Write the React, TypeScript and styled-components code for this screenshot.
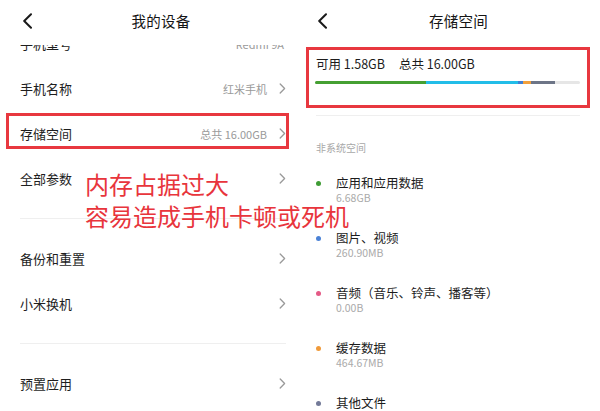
import React from "react";
import styled, { createGlobalStyle } from "styled-components";

const Global = createGlobalStyle`
  html, body { margin: 0; padding: 0; background: #fff; }
  body { font-family: "Noto Sans CJK SC", "Noto Sans", sans-serif; color: #1c1c1c; }
  * { box-sizing: border-box; }
`;

const Root = styled.div`
  position: relative;
  width: 600px;
  height: 411px;
  overflow: hidden;
  display: flex;
  background: #fff;
`;

const Panel = styled.div`
  width: 300px;
  height: 411px;
  display: flex;
  flex-direction: column;
  overflow: hidden;
`;

const Header = styled.div<{ $pl: number }>`
  position: relative;
  z-index: 2;
  height: 45px;
  flex: none;
  background: #fff;
  display: grid;
  grid-template-columns: 1fr auto 1fr;
  align-items: center;
  padding: 0 0 3px ${(p) => p.$pl}px;
`;

const Back = styled.svg`
  width: 11px;
  height: 16px;
  display: block;
`;

const Title = styled.div`
  font-size: 14.5px;
  color: #151515;
  line-height: 20px;
  letter-spacing: 0.3px;
`;

const Viewport = styled.div`
  flex: 1;
  overflow: hidden;
`;

const List = styled.div`
  margin-top: -24px;
`;

const Row = styled.div<{ $mark?: boolean }>`
  position: relative;
  height: 45px;
  display: flex;
  align-items: center;
  padding: 0 14px 0 20px;
  &::after {
    content: "";
    display: ${(p) => (p.$mark ? "block" : "none")};
    position: absolute;
    left: 6px;
    right: 11px;
    top: 2px;
    bottom: 7px;
    border: 3px solid #e8383f;
  }
`;

const Label = styled.div`
  flex: 1;
  font-size: 13px;
  color: #1e1e1e;
  line-height: 18px;
`;

const Value = styled.div<{ $noChevron?: boolean }>`
  font-size: 11px;
  color: #9a9a9a;
  margin-right: ${(p) => (p.$noChevron ? 2 : 12)}px;
  line-height: 16px;
`;

const Chevron = styled.svg`
  width: 7px;
  height: 11px;
  display: block;
`;

const Divider = styled.div<{ $m: string }>`
  height: 1px;
  background: #efefef;
  margin: ${(p) => p.$m};
`;

const Card = styled.div`
  margin: 2px 10px 0 6px;
  height: 61px;
  border: 3px solid #e8383f;
  padding: 5px 7px 0 6px;
`;

const Summary = styled.div`
  font-size: 12.5px;
  line-height: 18px;
  color: #1c1c1c;
  padding-left: 1px;
  display: flex;
  gap: 14px;
`;

const Bar = styled.div`
  margin-top: 8px;
  height: 3px;
  display: flex;
  background: #e6e6e6;
  border-radius: 2px;
  overflow: hidden;
`;

const Seg = styled.div<{ $c: string }>`
  height: 100%;
  background: ${(p) => p.$c};
`;

const Section = styled.div`
  margin: 25px 0 0 16px;
  font-size: 10px;
  line-height: 14px;
  color: #a8a8a8;
`;

const Items = styled.div`
  margin-top: 20px;
  display: flex;
  flex-direction: column;
  gap: 26px;
`;

const Item = styled.div`
  display: grid;
  grid-template-columns: 20px 1fr;
  padding-left: 16px;
`;

const Dot = styled.span<{ $c: string }>`
  width: 5px;
  height: 5px;
  border-radius: 50%;
  background: ${(p) => p.$c};
  margin-top: 6px;
`;

const ItemText = styled.div`
  display: flex;
  flex-direction: column;
`;

const ItemLabel = styled.div`
  font-size: 12.5px;
  line-height: 16px;
  color: #1c1c1c;
`;

const ItemValue = styled.div`
  font-size: 10.5px;
  line-height: 13px;
  color: #aaaaaa;
`;

const Note = styled.div`
  position: absolute;
  left: 85px;
  top: 168px;
  font-size: 24px;
  line-height: 32px;
  color: #e8353c;
  white-space: nowrap;
  letter-spacing: 0;
`;

const BackIcon = () => (
  <Back viewBox="0 0 11 16">
    <path d="M9 1.2 L2.2 8 L9 14.8" fill="none" stroke="#1a1a1a" strokeWidth="2" strokeLinecap="round" strokeLinejoin="round" />
  </Back>
);

const ChevronIcon = () => (
  <Chevron viewBox="0 0 7 11">
    <path d="M1.2 1 L5.6 5.5 L1.2 10" fill="none" stroke="#9a9a9a" strokeWidth="1.3" strokeLinecap="round" strokeLinejoin="round" />
  </Chevron>
);

type RowData = { label: string; value?: string; mark?: boolean; noChevron?: boolean };

const group1: RowData[] = [
  { label: "手机型号", value: "Redmi 9A", noChevron: true },
  { label: "手机名称", value: "红米手机" },
  { label: "存储空间", value: "总共 16.00GB", mark: true },
  { label: "全部参数" },
];
const group2: RowData[] = [{ label: "备份和重置" }, { label: "小米换机" }];
const group3: RowData[] = [{ label: "预置应用" }];

const segments = [
  { w: 111, c: "#45a032" },
  { w: 92, c: "#22bde8" },
  { w: 5, c: "#3f7fd6" },
  { w: 8, c: "#f2a03c" },
  { w: 24, c: "#6d7587" },
];
const barWidth = 265;

const items = [
  { label: "应用和应用数据", value: "6.68GB", c: "#3f9c35" },
  { label: "图片、视频", value: "260.90MB", c: "#4b82d6" },
  { label: "音频（音乐、铃声、播客等）", value: "0.00B", c: "#e45a86" },
  { label: "缓存数据", value: "464.67MB", c: "#f09a3a" },
  { label: "其他文件", value: "", c: "#737a98" },
];

const renderRows = (rows: RowData[]) =>
  rows.map((r) => (
    <Row key={r.label} $mark={r.mark}>
      <Label>{r.label}</Label>
      {r.value && <Value $noChevron={r.noChevron}>{r.value}</Value>}
      {!r.noChevron && <ChevronIcon />}
    </Row>
  ));

export default function App() {
  return (
    <Root>
      <Global />
      <Panel>
        <Header $pl={22}>
          <BackIcon />
          <Title>我的设备</Title>
          <span />
        </Header>
        <Viewport>
          <List>
            {renderRows(group1)}
            <Divider $m="17px 14px 17px 20px" />
            {renderRows(group2)}
            <Divider $m="17px 14px 17px 20px" />
            {renderRows(group3)}
          </List>
        </Viewport>
      </Panel>
      <Panel>
        <Header $pl={17}>
          <BackIcon />
          <Title>存储空间</Title>
          <span />
        </Header>
        <Card>
          <Summary>
            <span>可用 1.58GB</span>
            <span>总共 16.00GB</span>
          </Summary>
          <Bar>
            {segments.map((s, i) => (
              <Seg key={i} $c={s.c} style={{ width: `${(s.w / barWidth) * 100}%` }} />
            ))}
          </Bar>
        </Card>
        <Divider $m="7px 20px 0 16px" />
        <Section>非系统空间</Section>
        <Items>
          {items.map((it) => (
            <Item key={it.label}>
              <Dot $c={it.c} />
              <ItemText>
                <ItemLabel>{it.label}</ItemLabel>
                {it.value && <ItemValue>{it.value}</ItemValue>}
              </ItemText>
            </Item>
          ))}
        </Items>
      </Panel>
      <Note>
        内存占据过大
        <br />
        容易造成手机卡顿或死机
      </Note>
    </Root>
  );
}
